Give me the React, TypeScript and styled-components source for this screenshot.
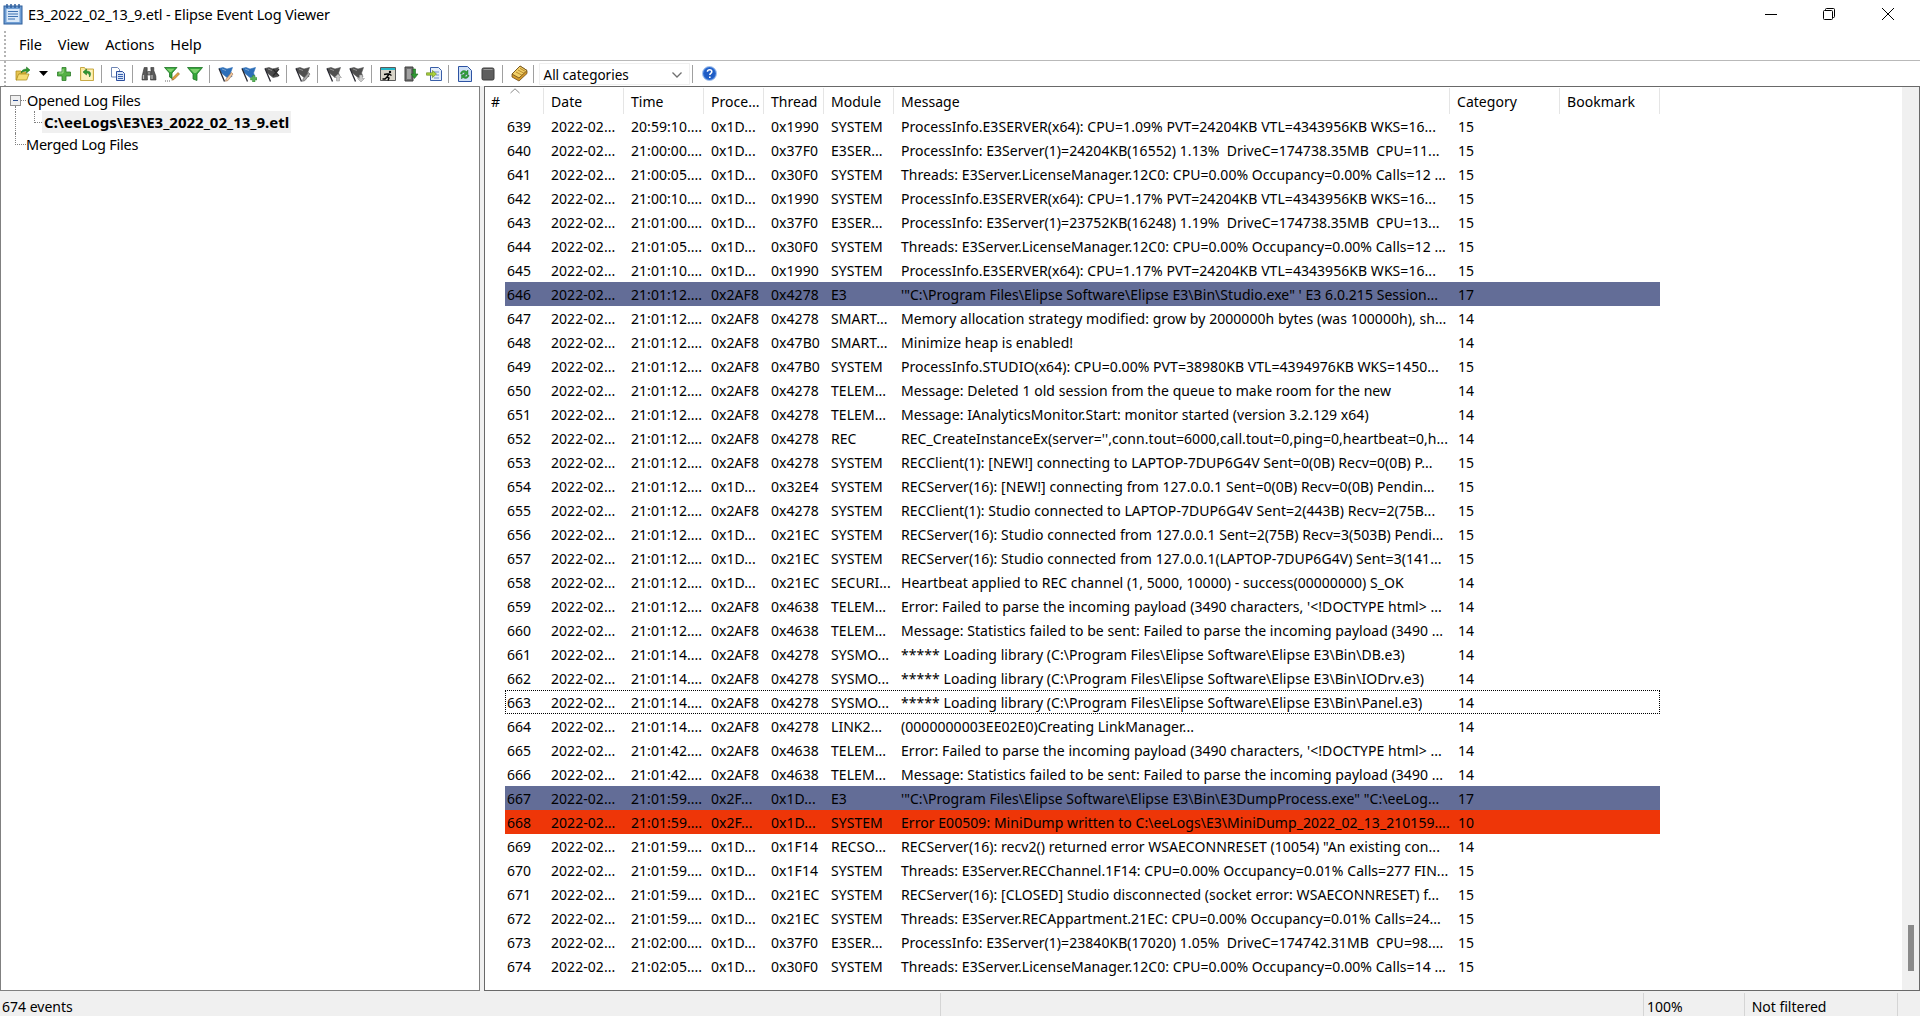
import React from 'react';
import styled, { createGlobalStyle } from 'styled-components';

const GlobalStyle = createGlobalStyle`
  html, body {
    margin: 0;
    padding: 0;
    height: 100%;
    overflow: hidden;
    background: #ffffff;
  }
  #root {
    height: 100%;
  }
`;

const ROW_COLUMNS = '39px 80px 80px 60px 60px 70px 556px 110px 100px';
const HEAD_COLUMNS = '59px 80px 80px 60px 60px 70px 556px 110px 100px';

const Window = styled.div`
  display: flex;
  flex-direction: column;
  width: 1920px;
  height: 1016px;
  overflow: hidden;
  font-family: 'Noto Sans', 'Open Sans', sans-serif;
  font-size: 14px;
  color: #000000;
  background: #ffffff;
`;

const TitleBar = styled.div`
  display: flex;
  align-items: center;
  box-sizing: border-box;
  height: 30px;
  flex: none;
  padding: 0 3px 2px 3px;
`;

const TitleText = styled.div`
  margin-left: 5px;
  font-size: 14.5px;
  letter-spacing: -0.18px;
`;

const WindowButtons = styled.div`
  display: flex;
  margin-left: auto;
  height: 28px;
`;

const WindowButton = styled.div`
  display: flex;
  align-items: center;
  justify-content: center;
  width: 58.5px;
`;

const MenuBar = styled.div`
  display: flex;
  align-items: center;
  height: 31px;
  flex: none;
  box-sizing: border-box;
  padding-bottom: 3px;
  border-bottom: 1px solid #b9b9b9;
`;

const Gripper = styled.div`
  width: 0;
  height: 26px;
  margin-left: 4px;
  border-left: 2px dotted #b4b4b4;
`;

const MenuList = styled.div`
  display: flex;
  margin-left: 13px;
  gap: 16px;
`;

const MenuItem = styled.div`
  font-size: 14.5px;
  letter-spacing: -0.1px;
`;

const ToolBar = styled.div`
  display: flex;
  align-items: center;
  height: 25px;
  flex: none;
`;

const ToolItems = styled.div`
  display: flex;
  align-items: center;
  margin-left: 5.5px;
`;

const ToolButton = styled.div<{ $w?: number }>`
  display: flex;
  align-items: center;
  justify-content: center;
  width: ${props => props.$w ?? 23}px;
  height: 22px;
`;

const ToolSep = styled.div`
  width: 1px;
  height: 18px;
  margin: 0 5px 0 2px;
  background: #a0a0a0;
`;

const ComboBox = styled.div`
  display: flex;
  align-items: center;
  justify-content: space-between;
  box-sizing: border-box;
  width: 151px;
  height: 22px;
  padding: 2px 7px 0 4px;
  border: 1px solid #f0f0f0;
  font-size: 13.5px;
`;

const Panes = styled.div`
  display: flex;
  flex: 1;
  min-height: 0;
  gap: 4px;
  background: #f0f0f0;
`;

const TreePane = styled.div`
  box-sizing: border-box;
  width: 480px;
  flex: none;
  padding-top: 2px;
  background: #ffffff;
  border: 1px solid #808080;
`;

const TreeRow = styled.div`
  display: flex;
  align-items: center;
  height: 22px;
  padding-left: 9px;
`;

const ToggleBox = styled.div`
  position: relative;
  box-sizing: border-box;
  display: flex;
  align-items: center;
  justify-content: center;
  width: 11px;
  height: 11px;
  margin-right: 6px;
  border: 1px solid #919191;
  background: #f0f0f0;

  &::before {
    content: '';
    width: 5px;
    height: 1px;
    background: #2d4f8f;
  }

  &::after {
    content: '';
    position: absolute;
    left: 10px;
    top: 4px;
    width: 5px;
    border-top: 1px dotted #808080;
  }
`;

const GuideStem = styled.div`
  position: absolute;
  left: 14px;
  top: 17px;
  height: 6px;
  border-left: 1px dotted #808080;
`;

const TreeBody = styled.div`
  position: relative;
`;

const GuideThrough = styled.div`
  align-self: stretch;
  width: 18px;
  margin-left: 5px;
  border-left: 1px dotted #808080;
`;

const GuideElbow = styled.div<{ $w: number; $ml?: number }>`
  align-self: flex-start;
  height: 11px;
  width: ${props => props.$w}px;
  margin-left: ${props => props.$ml ?? 0}px;
  border-left: 1px dotted #808080;
  border-bottom: 1px dotted #808080;
`;

const TreeLabel = styled.div<{ $active?: boolean }>`
  display: flex;
  align-items: center;
  height: 22px;
  padding: 0 2px;
  margin-left: ${props => (props.$active ? 0 : -2)}px;
  background: ${props => (props.$active ? '#f0f0f0' : 'transparent')};
  font-weight: ${props => (props.$active ? 700 : 400)};
  font-size: ${props => (props.$active ? '15px' : '14.5px')};
  letter-spacing: ${props => (props.$active ? '0' : '-0.25px')};
`;

const ListPane = styled.div`
  display: flex;
  flex: 1;
  min-width: 0;
  background: #ffffff;
  border: 1px solid #696969;
`;

const ListArea = styled.div`
  flex: 1;
  min-width: 0;
`;

const HeaderRow = styled.div`
  display: grid;
  grid-template-columns: ${HEAD_COLUMNS};
  height: 27px;
`;

const HeaderCell = styled.div`
  position: relative;
  display: flex;
  align-items: center;
  box-sizing: border-box;
  padding-left: 7px;
  margin-top: 1px;
  border-right: 1px solid #e5e5e5;
  font-size: 14px;
  letter-spacing: 0.03px;
  white-space: nowrap;
  overflow: hidden;

  &:first-child {
    padding-left: 6px;
  }
`;

const SortCaret = styled.svg`
  position: absolute;
  left: 25px;
  top: 0;
`;

const Row = styled.div<{ $tone?: 'marker' | 'error'; $focus?: boolean }>`
  display: grid;
  grid-template-columns: ${ROW_COLUMNS};
  box-sizing: border-box;
  height: 24px;
  margin-left: 20px;
  width: 1155px;
  align-items: center;
  letter-spacing: 0.05px;
  background: ${props =>
    props.$tone === 'marker' ? '#636d97' : props.$tone === 'error' ? '#ee3608' : 'transparent'};
  outline: ${props => (props.$focus ? '1px dotted #000000' : 'none')};
  outline-offset: -1px;
`;

const Cell = styled.div<{ $pad?: number }>`
  padding-left: ${props => props.$pad ?? 7}px;
  white-space: nowrap;
  overflow: hidden;
`;

const ScrollBar = styled.div`
  display: flex;
  flex-direction: column;
  align-items: center;
  width: 17px;
  flex: none;
  background: #f0f0f0;
`;

const ScrollThumb = styled.div`
  width: 6px;
  height: 46px;
  margin-top: 838px;
  background: #8a8a8a;
`;

const StatusBar = styled.div`
  display: flex;
  height: 25px;
  flex: none;
  padding-top: 2px;
  box-sizing: border-box;
  background: #f0f0f0;
`;

const StatusPanel = styled.div<{ $w: number; $first?: boolean }>`
  box-sizing: border-box;
  width: ${props => props.$w}px;
  padding-left: ${props => (props.$first ? 2 : 3)}px;
  line-height: 28px;
  font-size: 14px;
  white-space: nowrap;
  border-left: ${props => (props.$first ? 'none' : '1px solid #d5d5d5')};
`;

const FolderOpenIcon = () => (
  <svg width="16" height="16" viewBox="0 0 16 16">
    <path d="M1 5h5l1 1h4v2H4L2 14H1z" fill="#e8c552" stroke="#b08f20" strokeWidth="0.8" />
    <path d="M3.5 8H14l-2.3 6H1.4z" fill="#f6dc73" stroke="#b08f20" strokeWidth="0.8" />
    <path d="M6 7c.5-3 3-4 5.5-4V1L15 4l-3.5 3V5C9.5 5 7.5 5.6 6 7z" fill="#2e9a2e" stroke="#17661a" strokeWidth="0.5" />
  </svg>
);

const DropCaret = () => (
  <svg width="9" height="5" viewBox="0 0 9 5">
    <path d="M0 0h9L4.5 5z" fill="#000000" />
  </svg>
);

const PlusIcon = () => (
  <svg width="16" height="16" viewBox="0 0 16 16">
    <path d="M6 1.5h4v4.5h4.5v4H10v4.5H6V10H1.5V6H6z" fill="#55b045" stroke="#2d7d2b" strokeWidth="0.8" />
    <path d="M7 3v4H3" fill="none" stroke="#a4dd91" strokeWidth="1" />
  </svg>
);

const FolderBackIcon = () => (
  <svg width="16" height="16" viewBox="0 0 16 16">
    <path d="M1.5 1.5h4l1 1.5h8v11.5h-13z" fill="#fbe99a" stroke="#c2a238" strokeWidth="0.9" />
    <path d="M3 14V4h10v10z" fill="#fdf2be" />
    <path d="M7.5 3 4 6l3.5 3V7c2 0 3 1 3 4 2-3 1.5-6-3-6z" fill="#2f9a34" stroke="#17661a" strokeWidth="0.5" />
  </svg>
);

const CopyIcon = () => (
  <svg width="16" height="16" viewBox="0 0 16 16">
    <path d="M1.5 1.5h6l2 2V11h-8z" fill="#ffffff" stroke="#6f86b5" />
    <path d="M6.5 5.5h6l2 2v7h-8z" fill="#d9e5f6" stroke="#2d4f9e" />
    <path d="M8 8.5h5M8 10.5h5M8 12.5h5" stroke="#3a62b0" strokeWidth="1" />
  </svg>
);

const BinocularsIcon = () => (
  <svg width="16" height="16" viewBox="0 0 16 16">
    <path d="M3.2 1.5h3v3h-.2L6.5 14H1l.2-4z" fill="#5a5a5a" stroke="#2f2f2f" strokeWidth="0.6" />
    <path d="M9.8 1.5h3v3l2 5.5.2 4H9.5l.5-9.5z" fill="#5a5a5a" stroke="#2f2f2f" strokeWidth="0.6" />
    <path d="M6.5 5.5h3V9h-3z" fill="#8c8c8c" stroke="#2f2f2f" strokeWidth="0.6" />
    <path d="M2.5 9v4M11 9v4" stroke="#bfbfbf" strokeWidth="1.2" />
  </svg>
);

const FunnelIcon = () => (
  <svg width="16" height="16" viewBox="0 0 16 16">
    <path d="M.5 1.5h15L10 8v6.5L6 13V8z" fill="#35a63a" stroke="#1d7223" strokeWidth="0.8" />
    <path d="M3 3h10L9 7H7z" fill="#7fd06e" />
  </svg>
);

const FunnelEditIcon = () => (
  <svg width="16" height="16" viewBox="0 0 16 16">
    <path d="M.5 1.5h12.5L8 7v5.5L5.5 11V7z" fill="#35a63a" stroke="#1d7223" strokeWidth="0.8" />
    <path d="M2.5 2.8h8L7.2 6H5.8z" fill="#7fd06e" />
    <path d="M14 6.5l1.5 1.5-5.5 5.5-2.2.7.7-2.2z" fill="#e2a13c" stroke="#8a5a1e" strokeWidth="0.6" />
    <path d="M1 15h1M3 15h1M5 15h1" stroke="#404040" strokeWidth="0.8" />
  </svg>
);

const FlagIcon = ({ tone, children }: { tone: string; children?: React.ReactNode }) => (
  <svg width="16" height="16" viewBox="0 0 16 16">
    <path d="M1 2.5l4-1 4 1.5 5.5-1.5L12.5 7 14 10.5 9 11.5 6.5 9.5 3.5 7z" fill={tone} stroke={tone} strokeWidth="0.6" />
    <path d="M1 2.5l5.5 13" stroke="#26262e" strokeWidth="1.3" />
    <path d="M4 3l4 1.5" stroke="#ffffff" strokeOpacity="0.35" strokeWidth="1" />
    {children}
  </svg>
);

const PencilMark = ({ tone, edge }: { tone: string; edge: string }) => (
  <path d="M13.5 6.5l1.5 1.5L10 14.5l-2.5.8.6-2.4z" fill={tone} stroke={edge} strokeWidth="0.6" />
);

const RunIcon = () => (
  <svg width="16" height="16" viewBox="0 0 16 16">
    <path d="M.5 1.5h15v13H.5z" fill="#d8d4c8" stroke="#5a5a5a" />
    <path d="M1 2h14v2H1z" fill="#22b7c9" />
    <circle cx="10" cy="6" r="1.2" fill="#000000" />
    <path d="M4 8.5l3-.5 2 0 2.5 1.5M9 8l-2 3 2 1-1 2.5M7 11l-2 2H2.5" fill="none" stroke="#000000" strokeWidth="1.4" />
  </svg>
);

const DoorIcon = () => (
  <svg width="16" height="16" viewBox="0 0 16 16">
    <path d="M2 1h8v14H2z" fill="#6f6f6f" stroke="#3e3e3e" />
    <path d="M4 3h4v10H4z" fill="#a3a3a3" />
    <path d="M10 3h2.5v5H15l-3.5 4.5L8 8h2.5z" fill="#2f9a34" stroke="#17661a" strokeWidth="0.6" />
  </svg>
);

const ArrowDocIcon = () => (
  <svg width="16" height="16" viewBox="0 0 16 16">
    <path d="M4.5 1.5h8l3 3v10h-11z" fill="#e5eefa" stroke="#3a5fa8" />
    <path d="M8 6h5M10 9h3M8 12h5" stroke="#6f8fcc" />
    <path d="M.5 6.8h6V4.5l4 3.5-4 3.5V9.2h-6z" fill="#a9d23a" stroke="#5f7d1b" strokeWidth="0.6" />
  </svg>
);

const RefreshDocIcon = () => (
  <svg width="16" height="16" viewBox="0 0 16 16">
    <path d="M1.5 .5h9l4 4v11h-13z" fill="#cfe0f6" stroke="#2d53a3" />
    <path d="M3.5 8c0-3 3.5-4.5 6-2.5L11 4v4.5H6.5L8 7c-1.5-1-2.8-.4-3 1z" fill="#2fa23a" stroke="#17661a" strokeWidth="0.4" />
    <path d="M12 9c0 3-3.5 4.5-6 2.5L4.5 13V8.8H9l-1.5 1.5c1.5 1 2.8.4 3-1.3z" fill="#2fa23a" stroke="#17661a" strokeWidth="0.4" />
  </svg>
);

const StopIcon = () => (
  <svg width="14" height="14" viewBox="0 0 14 14">
    <rect x="1" y="1" width="12" height="12" rx="1.5" fill="#5e5e5e" stroke="#3c3c3c" />
    <path d="M2.5 2.5h9" stroke="#9a9a9a" />
  </svg>
);

const BookIcon = () => (
  <svg width="17" height="17" viewBox="0 0 17 17">
    <path d="M1 9l8-8 7 4.5v3L8 16l-7-4z" fill="#d59a2a" stroke="#6b4a16" strokeWidth="0.8" />
    <path d="M1 9l7 4 8-7.5L9 1z" fill="#f1cf67" stroke="#6b4a16" strokeWidth="0.8" />
    <path d="M5 7l6 3.2M7 5l6 3.2M9 3.4l5 2.8" stroke="#a9781e" strokeWidth="0.8" />
  </svg>
);

const HelpIcon = () => (
  <svg width="15" height="15" viewBox="0 0 15 15">
    <circle cx="7.5" cy="7.5" r="7" fill="#2f6fd4" stroke="#a8c4ec" />
    <circle cx="7.5" cy="7.5" r="5.4" fill="#1f5cc4" />
    <path d="M5.4 5.8c.2-2.6 4.4-2.6 4.4 0 0 1.7-2 1.6-2 3.2" fill="none" stroke="#ffffff" strokeWidth="1.5" />
    <path d="M7 10.4h1.6V12H7z" fill="#ffffff" />
  </svg>
);

const AppIcon = () => (
  <svg width="20" height="22" viewBox="0 0 20 22">
    <rect x="1" y="3" width="18" height="18" fill="#6f9ed4" stroke="#2f5f9c" />
    <rect x="3.5" y="6" width="13" height="13" fill="#d9e8f8" />
    <path d="M5 8.5h10M5 11h10M5 13.5h10M5 16h7" stroke="#3f72b2" />
    <path d="M4 1v4M8 1v4M12 1v4M16 1v4" stroke="#2f5f9c" strokeWidth="1.5" />
  </svg>
);

const ComboArrow = () => (
  <svg width="10" height="6" viewBox="0 0 10 6">
    <path d="M.5 .5 5 5 9.5 .5" fill="none" stroke="#6f6f6f" strokeWidth="1.3" />
  </svg>
);

type Tone = 'marker' | 'error';

interface LogRow {
  id: number;
  time: string;
  proc: string;
  thread: string;
  module: string;
  message: string;
  category: number;
  tone?: Tone;
  focus?: boolean;
}

const r = (
  id: number,
  time: string,
  proc: string,
  thread: string,
  module: string,
  message: string,
  category: number,
  tone?: Tone,
  focus?: boolean
): LogRow => ({ id, time, proc, thread, module, message, category, tone, focus });

const P1 = '0x1D...';
const P2 = '0x2AF8';
const P3 = '0x2F...';

const rows: LogRow[] = [
  r(639, '20:59:10....', P1, '0x1990', 'SYSTEM', 'ProcessInfo.E3SERVER(x64): CPU=1.09% PVT=24204KB VTL=4343956KB WKS=16...', 15),
  r(640, '21:00:00....', P1, '0x37F0', 'E3SER...', 'ProcessInfo: E3Server(1)=24204KB(16552) 1.13%  DriveC=174738.35MB  CPU=11...', 15),
  r(641, '21:00:05....', P1, '0x30F0', 'SYSTEM', 'Threads: E3Server.LicenseManager.12C0: CPU=0.00% Occupancy=0.00% Calls=12 ...', 15),
  r(642, '21:00:10....', P1, '0x1990', 'SYSTEM', 'ProcessInfo.E3SERVER(x64): CPU=1.17% PVT=24204KB VTL=4343956KB WKS=16...', 15),
  r(643, '21:01:00....', P1, '0x37F0', 'E3SER...', 'ProcessInfo: E3Server(1)=23752KB(16248) 1.19%  DriveC=174738.35MB  CPU=13...', 15),
  r(644, '21:01:05....', P1, '0x30F0', 'SYSTEM', 'Threads: E3Server.LicenseManager.12C0: CPU=0.00% Occupancy=0.00% Calls=12 ...', 15),
  r(645, '21:01:10....', P1, '0x1990', 'SYSTEM', 'ProcessInfo.E3SERVER(x64): CPU=1.17% PVT=24204KB VTL=4343956KB WKS=16...', 15),
  r(646, '21:01:12....', P2, '0x4278', 'E3', '\'"C:\\Program Files\\Elipse Software\\Elipse E3\\Bin\\Studio.exe" \' E3 6.0.215 Session...', 17, 'marker'),
  r(647, '21:01:12....', P2, '0x4278', 'SMART...', 'Memory allocation strategy modified: grow by 2000000h bytes (was 100000h), sh...', 14),
  r(648, '21:01:12....', P2, '0x47B0', 'SMART...', 'Minimize heap is enabled!', 14),
  r(649, '21:01:12....', P2, '0x47B0', 'SYSTEM', 'ProcessInfo.STUDIO(x64): CPU=0.00% PVT=38980KB VTL=4394976KB WKS=1450...', 15),
  r(650, '21:01:12....', P2, '0x4278', 'TELEM...', 'Message: Deleted 1 old session from the queue to make room for the new', 14),
  r(651, '21:01:12....', P2, '0x4278', 'TELEM...', 'Message: IAnalyticsMonitor.Start: monitor started (version 3.2.129 x64)', 14),
  r(652, '21:01:12....', P2, '0x4278', 'REC', "REC_CreateInstanceEx(server='',conn.tout=6000,call.tout=0,ping=0,heartbeat=0,h...", 14),
  r(653, '21:01:12....', P2, '0x4278', 'SYSTEM', 'RECClient(1): [NEW!] connecting to LAPTOP-7DUP6G4V Sent=0(0B) Recv=0(0B) P...', 15),
  r(654, '21:01:12....', P1, '0x32E4', 'SYSTEM', 'RECServer(16): [NEW!] connecting from 127.0.0.1 Sent=0(0B) Recv=0(0B) Pendin...', 15),
  r(655, '21:01:12....', P2, '0x4278', 'SYSTEM', 'RECClient(1): Studio connected to LAPTOP-7DUP6G4V Sent=2(443B) Recv=2(75B...', 15),
  r(656, '21:01:12....', P1, '0x21EC', 'SYSTEM', 'RECServer(16): Studio connected from 127.0.0.1 Sent=2(75B) Recv=3(503B) Pendi...', 15),
  r(657, '21:01:12....', P1, '0x21EC', 'SYSTEM', 'RECServer(16): Studio connected from 127.0.0.1(LAPTOP-7DUP6G4V) Sent=3(141...', 15),
  r(658, '21:01:12....', P1, '0x21EC', 'SECURI...', 'Heartbeat applied to REC channel (1, 5000, 10000) - success(00000000) S_OK', 14),
  r(659, '21:01:12....', P2, '0x4638', 'TELEM...', "Error: Failed to parse the incoming payload (3490 characters, '<!DOCTYPE html> ...", 14),
  r(660, '21:01:12....', P2, '0x4638', 'TELEM...', 'Message: Statistics failed to be sent: Failed to parse the incoming payload (3490 ...', 14),
  r(661, '21:01:14....', P2, '0x4278', 'SYSMO...', '***** Loading library (C:\\Program Files\\Elipse Software\\Elipse E3\\Bin\\DB.e3)', 14),
  r(662, '21:01:14....', P2, '0x4278', 'SYSMO...', '***** Loading library (C:\\Program Files\\Elipse Software\\Elipse E3\\Bin\\IODrv.e3)', 14),
  r(663, '21:01:14....', P2, '0x4278', 'SYSMO...', '***** Loading library (C:\\Program Files\\Elipse Software\\Elipse E3\\Bin\\Panel.e3)', 14, undefined, true),
  r(664, '21:01:14....', P2, '0x4278', 'LINK2...', '(0000000003EE02E0)Creating LinkManager...', 14),
  r(665, '21:01:42....', P2, '0x4638', 'TELEM...', "Error: Failed to parse the incoming payload (3490 characters, '<!DOCTYPE html> ...", 14),
  r(666, '21:01:42....', P2, '0x4638', 'TELEM...', 'Message: Statistics failed to be sent: Failed to parse the incoming payload (3490 ...', 14),
  r(667, '21:01:59....', P3, '0x1D...', 'E3', '\'"C:\\Program Files\\Elipse Software\\Elipse E3\\Bin\\E3DumpProcess.exe" "C:\\eeLog...', 17, 'marker'),
  r(668, '21:01:59....', P3, '0x1D...', 'SYSTEM', 'Error E00509: MiniDump written to C:\\eeLogs\\E3\\MiniDump_2022_02_13_210159....', 10, 'error'),
  r(669, '21:01:59....', P1, '0x1F14', 'RECSO...', 'RECServer(16): recv2() returned error WSAECONNRESET (10054) "An existing con...', 14),
  r(670, '21:01:59....', P1, '0x1F14', 'SYSTEM', 'Threads: E3Server.RECChannel.1F14: CPU=0.00% Occupancy=0.01% Calls=277 FIN...', 15),
  r(671, '21:01:59....', P1, '0x21EC', 'SYSTEM', 'RECServer(16): [CLOSED] Studio disconnected (socket error: WSAECONNRESET) f...', 15),
  r(672, '21:01:59....', P1, '0x21EC', 'SYSTEM', 'Threads: E3Server.RECAppartment.21EC: CPU=0.00% Occupancy=0.01% Calls=24...', 15),
  r(673, '21:02:00....', P1, '0x37F0', 'E3SER...', 'ProcessInfo: E3Server(1)=23840KB(17020) 1.05%  DriveC=174742.31MB  CPU=98....', 15),
  r(674, '21:02:05....', P1, '0x30F0', 'SYSTEM', 'Threads: E3Server.LicenseManager.12C0: CPU=0.00% Occupancy=0.00% Calls=14 ...', 15),
];

const columns = ['#', 'Date', 'Time', 'Proce...', 'Thread', 'Module', 'Message', 'Category', 'Bookmark'];

const CellText = styled.span`
  white-space: pre;
`;

const App: React.FC = () => {
  return (
    <Window>
      <GlobalStyle />
      <TitleBar>
        <AppIcon />
        <TitleText>E3_2022_02_13_9.etl - Elipse Event Log Viewer</TitleText>
        <WindowButtons>
          <WindowButton>
            <svg width="12" height="12" viewBox="0 0 12 12">
              <path d="M0 6.5h12" stroke="#000000" />
            </svg>
          </WindowButton>
          <WindowButton>
            <svg width="12" height="12" viewBox="0 0 12 12">
              <rect x=".5" y="2.5" width="9" height="9" rx="1" fill="none" stroke="#000000" />
              <path d="M2.5 2.5v-1a1 1 0 0 1 1-1h7a1 1 0 0 1 1 1v7a1 1 0 0 1-1 1h-1" fill="none" stroke="#000000" />
            </svg>
          </WindowButton>
          <WindowButton>
            <svg width="12" height="12" viewBox="0 0 12 12">
              <path d="M0 0l12 12M12 0 0 12" stroke="#000000" />
            </svg>
          </WindowButton>
        </WindowButtons>
      </TitleBar>

      <MenuBar>
        <Gripper />
        <MenuList>
          <MenuItem>File</MenuItem>
          <MenuItem>View</MenuItem>
          <MenuItem>Actions</MenuItem>
          <MenuItem>Help</MenuItem>
        </MenuList>
      </MenuBar>

      <ToolBar>
        <Gripper />
        <ToolItems>
          <ToolButton><FolderOpenIcon /></ToolButton>
          <ToolButton $w={18}><DropCaret /></ToolButton>
          <ToolButton><PlusIcon /></ToolButton>
          <ToolButton><FolderBackIcon /></ToolButton>
          <ToolSep />
          <ToolButton><CopyIcon /></ToolButton>
          <ToolSep />
          <ToolButton><BinocularsIcon /></ToolButton>
          <ToolButton><FunnelEditIcon /></ToolButton>
          <ToolButton><FunnelIcon /></ToolButton>
          <ToolSep />
          <ToolButton>
            <FlagIcon tone="#2d6fb8"><PencilMark tone="#efc9a0" edge="#a8744a" /></FlagIcon>
          </ToolButton>
          <ToolButton>
            <FlagIcon tone="#2d6fb8">
              <path d="M9.5 11.5h2v-2h2.5v2h2V14h-2v2h-2.5v-2h-2z" fill="#58b25a" stroke="#2d7d2b" strokeWidth="0.4" />
            </FlagIcon>
          </ToolButton>
          <ToolButton>
            <FlagIcon tone="#4a4a4a"><path d="M9 3l6 7M15 3 9 10" stroke="#2a2a2a" strokeWidth="1.2" /></FlagIcon>
          </ToolButton>
          <ToolSep />
          <ToolButton>
            <FlagIcon tone="#505050"><PencilMark tone="#a8a8a8" edge="#5a5a5a" /></FlagIcon>
          </ToolButton>
          <ToolSep />
          <ToolButton>
            <FlagIcon tone="#505050"><path d="M12 8l3.5 3.5h-2V15h-3v-3.5h-2z" fill="#c9c9c9" stroke="#8e8e8e" strokeWidth="0.5" /></FlagIcon>
          </ToolButton>
          <ToolButton>
            <FlagIcon tone="#505050"><path d="M12 16l3.5-3.5h-2V9h-3v3.5h-2z" fill="#c9c9c9" stroke="#8e8e8e" strokeWidth="0.5" /></FlagIcon>
          </ToolButton>
          <ToolSep />
          <ToolButton><RunIcon /></ToolButton>
          <ToolButton><DoorIcon /></ToolButton>
          <ToolButton><ArrowDocIcon /></ToolButton>
          <ToolSep />
          <ToolButton><RefreshDocIcon /></ToolButton>
          <ToolButton><StopIcon /></ToolButton>
          <ToolSep />
          <ToolButton><BookIcon /></ToolButton>
          <ToolSep />
          <ComboBox>
            All categories
            <ComboArrow />
          </ComboBox>
          <ToolSep />
          <ToolButton><HelpIcon /></ToolButton>
        </ToolItems>
      </ToolBar>

      <Panes>
        <TreePane>
          <TreeBody>
            <TreeRow>
              <ToggleBox />
              <TreeLabel>Opened Log Files</TreeLabel>
            </TreeRow>
            <GuideStem />
            <TreeRow>
              <GuideThrough />
              <GuideElbow $w={7} />
              <TreeLabel $active>C:\eeLogs\E3\E3_2022_02_13_9.etl</TreeLabel>
            </TreeRow>
            <TreeRow>
              <GuideElbow $w={10} $ml={5} />
              <TreeLabel>Merged Log Files</TreeLabel>
            </TreeRow>
          </TreeBody>
        </TreePane>

        <ListPane>
          <ListArea>
            <HeaderRow>
              {columns.map(name => (
                <HeaderCell key={name}>
                  {name}
                  {name === '#' && (
                    <SortCaret width="10" height="6" viewBox="0 0 10 6">
                      <path d="M.5 5 5 .8 9.5 5" fill="none" stroke="#8a8a8a" />
                    </SortCaret>
                  )}
                </HeaderCell>
              ))}
            </HeaderRow>
            {rows.map(row => (
              <Row key={row.id} $tone={row.tone} $focus={row.focus}>
                <Cell $pad={2}>{row.id}</Cell>
                <Cell>2022-02...</Cell>
                <Cell>{row.time}</Cell>
                <Cell>{row.proc}</Cell>
                <Cell>{row.thread}</Cell>
                <Cell>{row.module}</Cell>
                <Cell><CellText>{row.message}</CellText></Cell>
                <Cell $pad={8}>{row.category}</Cell>
                <Cell />
              </Row>
            ))}
          </ListArea>
          <ScrollBar>
            <ScrollThumb />
          </ScrollBar>
        </ListPane>
      </Panes>

      <StatusBar>
        <StatusPanel $w={940} $first>674 events</StatusPanel>
        <StatusPanel $w={703} />
        <StatusPanel $w={101}>100%</StatusPanel>
        <StatusPanel $w={153}>&nbsp;Not filtered</StatusPanel>
        <StatusPanel $w={23} />
      </StatusBar>
    </Window>
  );
};

export default App;
